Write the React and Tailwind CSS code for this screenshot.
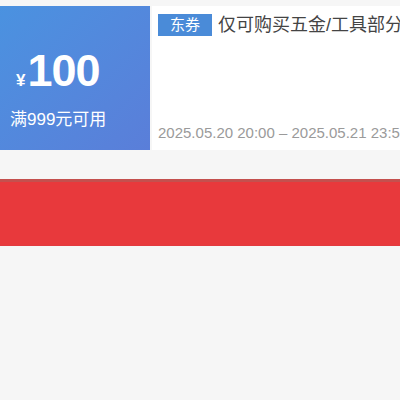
export default function App() {
  return (
    <div className="w-[400px] h-[400px] bg-[#f6f6f6] overflow-hidden" style={{ fontFamily: '"Liberation Sans", "Noto Sans CJK SC", sans-serif' }}>
      <div className="h-[6px]" />
      <div className="flex h-[144px]">
        <div className="w-[150px] shrink-0 bg-gradient-to-br from-[#4a92e0] to-[#5a7ed9] flex flex-col pl-[10px]">
          <div className="flex items-baseline mt-[42px] pl-[6px] text-white leading-none">
            <span className="text-[17px] font-bold mr-[2px]">¥</span>
            <span className="text-[45px] font-bold tracking-[-1px]">100</span>
          </div>
          <div className="text-white text-[17px] leading-none mt-[18px]">满999元可用</div>
        </div>
        <div className="flex-1 bg-white ml-[2px] flex flex-col pl-[6px] overflow-hidden">
          <div className="flex items-center mt-[8px] whitespace-nowrap">
            <span className="shrink-0 bg-[#4a8bd8] text-white text-[15px] leading-[22px] w-[54px] text-center">东券</span>
            <span className="ml-[6px] text-[18px] text-[#444] leading-none">仅可购买五金/工具部分商品</span>
          </div>
          <div className="mt-auto mb-[10px] text-[15px] text-[#9a9a9a] whitespace-nowrap leading-none">2025.05.20 20:00 – 2025.05.21 23:59</div>
        </div>
      </div>
      <div className="h-[29px]" />
      <div className="h-[67px] bg-[#e8393c] border-t-[3px] border-[#c4504e] border-b border-b-[#e23a3f]" />
    </div>
  );
}
